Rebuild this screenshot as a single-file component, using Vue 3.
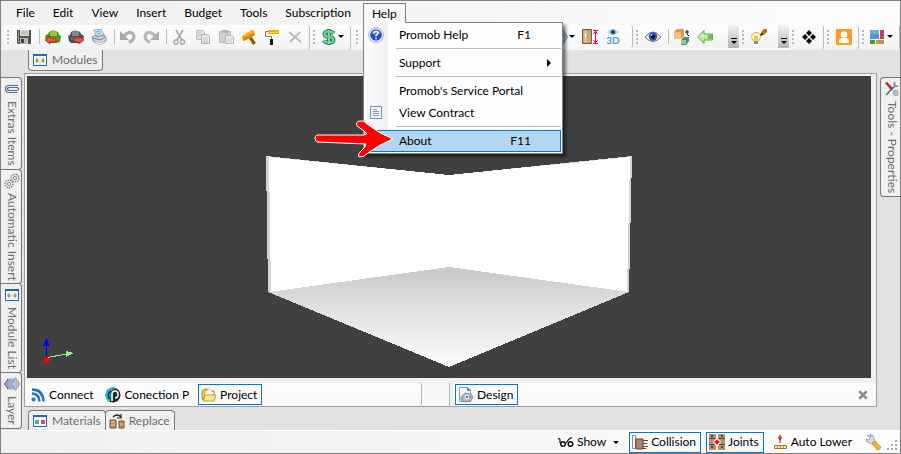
<script setup>
import { ref } from 'vue';

const menus = ['File', 'Edit', 'View', 'Insert', 'Budget', 'Tools', 'Subscription'];

const helpItems = ref([
  { label: 'Promob Help', keys: 'F1', icon: 'help' },
  { divider: true },
  { label: 'Support', submenu: true },
  { divider: true },
  { label: "Promob's Service Portal" },
  { label: 'View Contract', icon: 'contract' },
  { divider: true },
  { label: 'About', keys: 'F11', active: true },
]);

const strips = [
  { tools: ['save', '|', 'sofa-in', 'sofa-out', 'printer', '|', 'undo', 'redo', '|', 'cut', 'copy', 'paste', 'hammer', 'roller', 'remove'] },
  { tools: ['dollar+'] },
  { tools: ['layers+', 'measure', 'view3d'], kind: 'views' },
  { tools: ['eye', '|', 'boxes', 'back'], kind: 'wide', overflow: true },
  { tools: ['bulb'], overflow: true },
  { tools: ['diamonds'] },
  { tools: ['user'] },
  { tools: ['blocks+'] },
];

const leftTabs = [
  { label: 'Extras Items', icon: 'clip' },
  { label: 'Automatic Insert', icon: 'gears' },
  { label: 'Module List', icon: 'modules' },
  { label: 'Layer', icon: 'layers' },
];

const iconOf = (tool) => tool.replace('+', '');
const hasArrow = (tool) => tool.endsWith('+');
</script>

<template>
  <div class="window">
    <svg class="sprite" aria-hidden="true">
      <defs>
        <linearGradient id="floor" x1="0" y1="0" x2="0" y2="1">
          <stop offset="0" stop-color="#c8c8c8" />
          <stop offset="0.4" stop-color="#e0e0e0" />
          <stop offset="1" stop-color="#fbfbfb" />
        </linearGradient>
      </defs>
      <symbol id="save" viewBox="0 0 16 16">
        <path d="M1 1h14v14H2l-1-1z" fill="#55554f" />
        <path d="M4 1h9v6H4z" fill="#d9ddc9" />
        <path d="M5 3h7M5 5h7" stroke="#a9ad9b" />
        <path d="M4 9h8v6H4z" fill="#b9b9b2" />
        <path d="M5 10h3v4H5z" fill="#3d3d3a" />
        <path d="M2 2h1v12H2z" fill="#8b8b80" />
      </symbol>
      <symbol id="sofa-in" viewBox="0 0 16 16">
        <path d="M4 3q4-3 9 0l1 3 2 1-1 6-3 1H4L0 9l1-3 2-1z" fill="#4f8f1c" />
        <path d="M5 3q3-2 7 0v4H5z" fill="#8bcb3a" />
        <path d="M4 8h9v3H4z" fill="#69b02a" />
        <path d="M0 11l5-4v2h6v4H5v2z" fill="#e4553f" stroke="#8f2418" stroke-width=".7" />
      </symbol>
      <symbol id="sofa-out" viewBox="0 0 16 16">
        <path d="M3 3q4-3 9 0l1 2 3 2-1 5-3 2H3l-2-2-1-5 2-1z" fill="#4b4e52" />
        <path d="M4 3q3-2 7 0v4H4z" fill="#85898e" />
        <path d="M3 8h9v3H3z" fill="#676b70" />
        <path d="M16 11l-5-4v2H6v4h5v2z" fill="#e4553f" stroke="#8f2418" stroke-width=".7" />
      </symbol>
      <symbol id="printer" viewBox="0 0 16 16">
        <path d="M3 1l7-1 3 6-8 2z" fill="#cfe3fb" stroke="#7c9dca" stroke-width=".8" />
        <path d="M5 3l4-1M6 5l4-1" stroke="#6e9fdc" />
        <path d="M1 8l4-2 1 2 7-2 2 2v4l-6 3-7-3z" fill="#d4d6da" stroke="#777b82" stroke-width=".8" />
        <path d="M2 9l7 2 5-3" fill="none" stroke="#777b82" />
        <path d="M4 12l5 2 5-2-1 2-4 2-5-2z" fill="#f8f8f8" stroke="#8b8f95" stroke-width=".5" />
      </symbol>
      <symbol id="undo" viewBox="0 0 16 16">
        <path d="M4 7Q9 1 13 5q3 5-4 8.500" fill="none" stroke="#b0b0b0" stroke-width="3.200" />
        <path d="M0 2v9h9z" fill="#a9a9a9" />
      </symbol>
      <symbol id="redo" viewBox="0 0 16 16">
        <path d="M12 7Q7 1 3 5q-3 5 4 8.500" fill="none" stroke="#b8b8b8" stroke-width="3.200" />
        <path d="M16 2v9H7z" fill="#adadad" />
      </symbol>
      <symbol id="cut" viewBox="0 0 16 16">
        <path d="M4 1l6 10M11 1L5 11" stroke="#aaa" stroke-width="1.700" />
        <ellipse cx="4" cy="13" rx="2" ry="2.200" fill="none" stroke="#aaa" stroke-width="1.400" />
        <ellipse cx="10.500" cy="13" rx="2" ry="2.200" fill="none" stroke="#aaa" stroke-width="1.400" />
      </symbol>
      <symbol id="copy" viewBox="0 0 16 16">
        <path d="M1.500 1.500h6l2 2v7h-8z" fill="#e0e0e0" stroke="#bcbcbc" />
        <path d="M6.500 5.500h6l2 2v7h-8z" fill="#e6e6e6" stroke="#b1b1b1" />
        <path d="M8 9h5M8 11h5M8 13h5M3 4h3M3 6h3" stroke="#c4c4c4" />
      </symbol>
      <symbol id="paste" viewBox="0 0 16 16">
        <path d="M1.500 2.500h11v11h-11z" fill="#d0d0d0" stroke="#bbb" />
        <path d="M4 1h6v3H4z" fill="#b5b5b5" />
        <path d="M7.500 6.500h6l2 2v6h-8z" fill="#ececec" stroke="#b4b4b4" />
        <path d="M9 10h5M9 12h5" stroke="#c4c4c4" />
      </symbol>
      <symbol id="hammer" viewBox="0 0 16 16">
        <path d="M7 8l3-1 5 7-3 2z" fill="#8d5a13" />
        <path d="M1 7l10-6 2 1 1 4-9 5-3 1z" fill="#f5ac0c" />
        <path d="M2 9l11-5 1 2-9 5-3 1z" fill="#d58a06" />
      </symbol>
      <symbol id="roller" viewBox="0 0 16 16">
        <path d="M4 1h11v4H4z" fill="#f7ac08" />
        <path d="M4 3h11v1H4z" fill="#ffca3e" />
        <path d="M4 2.500H1.500v5h6V10" fill="none" stroke="#777" />
        <path d="M6 10h3v6H6z" fill="#111" />
      </symbol>
      <symbol id="remove" viewBox="0 0 16 16">
        <path d="M2 3l12 10M13 3L3 13" stroke="#bdbdbd" stroke-width="2.200" />
      </symbol>
      <symbol id="dollar" viewBox="0 0 16 16">
        <path d="M13 4.500Q11 2.500 8 2.500q-4.500 0-4.500 2.500T8 8t4.500 3-4.500 2.500-5-2M8 0v16" fill="none" stroke="#24804c" stroke-width="4" />
        <path d="M13 4.500Q11 2.500 8 2.500q-4.500 0-4.500 2.500T8 8t4.500 3-4.500 2.500-5-2M8 1v14" fill="none" stroke="#7fd6a0" stroke-width="2" />
      </symbol>
      <symbol id="help" viewBox="0 0 16 16">
        <circle cx="8" cy="8" r="7.500" fill="#e9eef6" stroke="#a0a9b8" stroke-width=".8" />
        <circle cx="8" cy="8" r="5.800" fill="#1d4ec4" />
        <path d="M3 6q5-5 10 0-5 3-10 0" fill="#5b87e0" />
        <path d="M5.800 6.300Q6 4.300 8 4.300t2.200 1.900Q10 7.200 8 8.500v1M8 10.700v1.500" fill="none" stroke="#fff" stroke-width="1.500" />
      </symbol>
      <symbol id="contract" viewBox="0 0 16 16">
        <path d="M2.500 1.500h11v12h-11z" fill="#f5f9ff" stroke="#668ec2" />
        <path d="M5 4.500h4M5 6.500h6M5 8.500h6M5 10.500h6" stroke="#8095b3" />
      </symbol>
      <symbol id="layers" viewBox="0 0 16 16">
        <path d="M4 2L0 8l4 6 4-6z" fill="#5d7590" />
        <path d="M6.500 1.500l-4.500 6.500 4.500 6.500L11 8z" fill="#7c95b0" stroke="#e5edf5" stroke-width=".6" />
        <path d="M9 1.500L4.500 8 9 14.500 13.500 8z" fill="#92abc5" stroke="#e5edf5" stroke-width=".6" />
        <path d="M11.500 1.500L7 8l4.500 6.500L16 8z" fill="#a9c0d8" stroke="#6d89a8" stroke-width=".6" />
      </symbol>
      <symbol id="measure" viewBox="0 0 16 16">
        <path d="M.5.500h9v14h-9z" fill="#c9a77b" stroke="#7b5a36" />
        <path d="M2 2h3v11H2z" fill="#dcc29b" />
        <path d="M3 5h1v3H3z" fill="#fff" />
        <path d="M11 1.500h5M11 14.500h5M13.500 2v12M11.500 5l2-3 2 3M11.500 11l2 3 2-3" fill="none" stroke="#d80d52" />
      </symbol>
      <symbol id="view3d" viewBox="0 0 16 8">
        <path d="M2 4q6-6 12 0-6 6-12 0" fill="#b8d7ea" />
        <circle cx="8" cy="4" r="2.600" fill="#3f7fae" />
        <circle cx="8" cy="4" r="1.200" fill="#0d2538" />
      </symbol>
      <symbol id="eye" viewBox="0 0 16 16">
        <path d="M0 8q8-10 16 0-8 9-16 0" fill="#efefed" stroke="#77716c" />
        <circle cx="8" cy="7.500" r="4.200" fill="#2351ae" />
        <circle cx="8" cy="7.500" r="1.900" fill="#07102c" />
        <circle cx="6.500" cy="6" r="1" fill="#9fc0f5" />
      </symbol>
      <symbol id="boxes" viewBox="0 0 16 16">
        <path d="M0 3l3-3h7v7l-3 3H0z" fill="#d49c50" />
        <path d="M0 3h7v7H0z" fill="#edbf80" />
        <path d="M7 11l3-3h5v4l-3 4H7z" fill="#4f8a68" />
        <path d="M7 11h5v4H7z" fill="#92c9a5" />
        <path d="M11 3h4M13 1v4l2 2" fill="none" stroke="#111" />
      </symbol>
      <symbol id="back" viewBox="0 0 16 16">
        <path d="M.700 8L7 1.500V5h8.500v6H7v3.500z" fill="#b7e79a" stroke="#61a94c" />
        <path d="M11 6h4v4h-4z" fill="#6fbd52" />
        <path d="M3 8l3-3v2h4" fill="none" stroke="#e4f8d8" />
      </symbol>
      <symbol id="bulb" viewBox="0 0 16 16">
        <path d="M5 3.500q5 0 4.500 4Q9 10 7.500 12h-5Q.500 10 .500 7.500.500 4 5 3.500z" fill="#fbf2b2" stroke="#cdb865" />
        <path d="M4 11V7l1 1 1-1v4" fill="none" stroke="#dba400" />
        <path d="M3 12h4v3H3z" fill="#8d9198" />
        <path d="M9 6l2-3 2 2-3 2z" fill="#222" />
        <path d="M10 3l3-3h3v3l-3 3z" fill="#cf6c17" />
      </symbol>
      <symbol id="diamonds" viewBox="0 0 16 16">
        <path d="M8 1l3 3-3 3-3-3zM8 9l3 3-3 3-3-3zM4 5l3 3-3 3-3-3zM12 5l3 3-3 3-3-3z" fill="#0d0d0d" />
      </symbol>
      <symbol id="user" viewBox="0 0 16 16">
        <path d="M0 0h16v16H0z" fill="#ff9b1a" />
        <circle cx="8" cy="5.500" r="3.300" fill="#fff" />
        <path d="M3 14v-2q0-3 3-3h4q3 0 3 3v2z" fill="#fff" />
      </symbol>
      <symbol id="blocks" viewBox="0 0 16 16">
        <path d="M0 1h9v9H0z" fill="#4d93d6" />
        <path d="M0 1h9v4H0z" fill="#6fabe3" />
        <path d="M10 1h4v9h-4z" fill="#b64753" />
        <path d="M0 11h5v4H0z" fill="#43a02e" />
        <path d="M6 11h8v4H6z" fill="#c2924a" />
      </symbol>
      <symbol id="modules" viewBox="0 0 16 16">
        <path d="M1.500 2.500h13v11h-13z" fill="#f4f8fb" stroke="#1d67be" />
        <path d="M1 2h14v2H1z" fill="#1d67be" />
        <path d="M8 5v8" stroke="#cadbe9" />
        <ellipse cx="5" cy="8.500" rx="1.500" ry="2.300" fill="#b59566" />
        <ellipse cx="11" cy="8.500" rx="1.500" ry="2.300" fill="#b59566" />
      </symbol>
      <symbol id="materials" viewBox="0 0 16 16">
        <path d="M1.500 2.500h13v11h-13z" fill="#f4f8fb" stroke="#1d67be" />
        <path d="M1 2h14v2H1z" fill="#1d67be" />
        <path d="M3 7h4v4H3z" fill="#68a183" />
        <path d="M9 7h4v4H9z" fill="#d4525b" />
      </symbol>
      <symbol id="replace" viewBox="0 0 16 16">
        <path d="M1 7h6v8H1zM10 8h5v7h-5z" fill="#bd9166" stroke="#755334" />
        <path d="M2 9h4M2 12h4M11 11h3" stroke="#e8caa2" />
        <path d="M4 4q4-4 8 0M12 1v4H8" fill="none" stroke="#222" stroke-width="1.200" />
      </symbol>
      <symbol id="clip" viewBox="0 0 16 16">
        <path d="M14 4.500H5Q1.500 4.500 1.500 8T5 11.500h8.500M14 6.500H6Q3.500 6.500 3.500 8T6 9.500h6.500q2 0 2-1.500t-2-1.500" fill="none" stroke="#4a6994" stroke-width="1.200" />
      </symbol>
      <symbol id="gears" viewBox="0 0 16 16">
        <g fill="none" stroke="#8c8c96">
          <circle cx="11" cy="5" r="3.800" stroke-dasharray="1.500 .800" stroke-width="1.600" />
          <circle cx="11" cy="5" r="1.600" />
          <circle cx="5" cy="11" r="3.800" stroke-dasharray="1.500 .800" stroke-width="1.600" />
          <circle cx="5" cy="11" r="1.600" />
        </g>
      </symbol>
      <symbol id="tools" viewBox="0 0 16 16">
        <path d="M2 14L12 4" stroke="#54647c" stroke-width="1.500" />
        <path d="M10 1q-2 3 1 5 3 1 4-2l-2 1-2-2 1-2z" fill="#8296b2" />
        <path d="M1 2l2-1 6 6-2 2z" fill="#c8202b" />
        <path d="M8 8l3 4M11 9l3 1v4l-3 1-2-3z" stroke="#9aa9bf" fill="#b7c3d4" />
      </symbol>
      <symbol id="feed" viewBox="0 0 16 16">
        <circle cx="3.500" cy="12.500" r="2" fill="#1d74c9" />
        <path d="M2 6.500q7 0 7.500 8M2 2.500q11 0 11.500 12" fill="none" stroke="#1d74c9" stroke-width="2.500" />
      </symbol>
      <symbol id="brand-p" viewBox="0 0 16 16">
        <circle cx="8" cy="8" r="7.500" fill="#1c2c33" />
        <path d="M8 .500Q0 1 .500 8.500 1 14 5 15L5.500 8Q5 3 11 1z" fill="#23bcd0" />
        <path d="M7 14V7.500Q7 4 10 4t3 3.500-3 3.500" fill="none" stroke="#fff" stroke-width="1.600" />
        <path d="M4 12q-2-6 2-8" fill="none" stroke="#1c2c33" stroke-width="1.500" />
      </symbol>
      <symbol id="folder" viewBox="0 0 16 16">
        <path d="M1 4l2-2h3l1 2h6v9H2L1 12z" fill="#e9c24c" stroke="#a67c18" stroke-width=".8" />
        <path d="M4 5l4-3 5 4-2 3H4z" fill="#fffbe8" stroke="#b7a36b" stroke-width=".6" />
        <path d="M4 8h11l-2 6H2z" fill="#ffe784" stroke="#b58c1f" stroke-width=".8" />
      </symbol>
      <symbol id="design" viewBox="0 0 16 16">
        <path d="M1.500.500h8l3 3v11h-11z" fill="#edf5ff" stroke="#77a0d3" />
        <path d="M9 0l4 4H9z" fill="#4f85c6" />
        <path d="M3 10l4-4 6 1 2 3-2 4-6 1-4-2z" fill="#aeb4bc" stroke="#747b86" stroke-width=".7" />
        <circle cx="9" cy="10" r="2.500" fill="#e9edf2" />
        <path d="M8 9h2v2H8z" fill="#436c9e" />
        <path d="M11 9h2v2h-2z" fill="#d18d3c" />
      </symbol>
      <symbol id="glasses" viewBox="0 0 16 16">
        <path d="M0 5q2-1 2 1v3M8 9q4-6 6-5" fill="none" stroke="#111" stroke-width="1.200" />
        <circle cx="5" cy="10" r="2.300" fill="none" stroke="#111" stroke-width="1.500" />
        <circle cx="12.500" cy="10" r="2.300" fill="none" stroke="#111" stroke-width="1.500" />
      </symbol>
      <symbol id="collision" viewBox="0 0 16 16">
        <path d="M.500 1.500h3v13h-3z" fill="#f2f2f2" stroke="#8c8c8c" />
        <path d="M4 5h7v10H4z" fill="#b08565" stroke="#5e4330" />
        <path d="M11 6.500h5M11 9.500h4M11 12.500h5M11 14.500h3" stroke="#5e4330" />
      </symbol>
      <symbol id="joints" viewBox="0 0 16 16">
        <path d="M0 0h7v16H0zM9 0h7v16H9z" fill="#b3906f" />
        <path d="M0 4.500h7M0 10.500h7M9 4.500h7M9 10.500h7" stroke="#5c4330" />
        <path d="M2 2h2M12 2h2M2 13h2M12 13h2" stroke="#3f2c1e" stroke-width="1.500" />
        <path d="M6.500 5h3v1.500H11v3H9.500V11h-3V9.500H5v-3h1.500z" fill="#f11" stroke="#fff" />
      </symbol>
      <symbol id="lower" viewBox="0 0 16 16">
        <path d="M8 0l2 4-2 3-2-3z" fill="#e04a4a" />
        <path d="M8 3v6" stroke="#8f2222" />
        <path d="M2.500 11.500h12v3h-12z" fill="#ffe7b0" stroke="#b16f19" />
        <path d="M5.500 12v2M8.500 12v2M11.500 12v2" stroke="#c68a3a" />
      </symbol>
      <symbol id="wrench" viewBox="0 0 16 16">
        <path d="M2 1l3 3-1 2-3-1q0 4 4 4l3 2 3-3-2-3q0-4-4-5l1 3z" fill="#d5dadf" stroke="#868e98" stroke-width=".7" />
        <path d="M7 9l3-2 6 6-2 3h-2z" fill="#f4b52a" stroke="#c7820f" stroke-width=".7" />
      </symbol>
    </svg>

    <nav class="menubar">
      <button v-for="menu in menus" :key="menu" class="menu-button">{{ menu }}</button>
      <div class="menu-open">
        <button class="menu-button open" aria-expanded="true">Help</button>
        <div class="dropdown" role="menu">
          <template v-for="(item, i) in helpItems" :key="i">
            <div v-if="item.divider" class="divider" role="separator" />
            <button v-else class="menu-item" :class="{ active: item.active }" role="menuitem">
              <span class="item-icon">
                <svg v-if="item.icon" class="icon"><use :href="'#' + item.icon" /></svg>
              </span>
              <span class="item-label">{{ item.label }}</span>
              <span v-if="item.keys" class="item-keys">{{ item.keys }}</span>
              <span v-if="item.submenu" class="submenu-arrow" />
            </button>
          </template>
          <svg class="pointer" viewBox="0 0 84 40">
            <path d="M5 15L50 15Q58 15 52 11L45 6Q43 2 48 1Q52 0 55 4Q68 14 81 19Q68 24 56 33Q51 38 47 37Q45 34 49 31Q54 27 54 24L5 22Q1 18 5 15z" fill="#f00" stroke="#fff" stroke-width="1" />
          </svg>
        </div>
      </div>
    </nav>

    <div class="toolbar">
      <div v-for="(strip, s) in strips" :key="s" class="strip" :class="[strip.kind, { overflowing: strip.overflow }]">
        <span class="grip" />
        <template v-for="(tool, t) in strip.tools" :key="t">
          <span v-if="tool === '|'" class="separator" />
          <button v-else-if="tool === 'view3d'" class="tool stacked">
            <svg class="icon"><use href="#view3d" /></svg>
            <span>3D</span>
          </button>
          <button v-else class="tool" :class="{ split: hasArrow(tool) }" :aria-label="iconOf(tool)">
            <svg class="icon"><use :href="'#' + iconOf(tool)" /></svg>
            <span v-if="hasArrow(tool)" class="caret" />
          </button>
        </template>
        <button v-if="strip.overflow" class="overflow" aria-label="More tools"><span class="caret" /></button>
      </div>
    </div>

    <main class="workspace">
      <aside class="side left">
        <button v-for="tab in leftTabs" :key="tab.label" class="side-tab">
          <svg class="icon"><use :href="'#' + tab.icon" /></svg>
          <span>{{ tab.label }}</span>
        </button>
      </aside>

      <section class="center">
        <div class="tabs top">
          <button class="tab"><svg class="icon"><use href="#modules" /></svg>Modules</button>
        </div>
        <div class="frame">
          <div class="stage">
            <svg class="scene" viewBox="27 76 844 302" shape-rendering="crispEdges">
              <path d="M266 156L449 175L632 156L629 292L449 367L268 292z" fill="#d4d4d4" />
              <path d="M269 157L449 175L630 157L627 292L449 267L271 292z" fill="#fff" />
              <path d="M269 292L449 267L629 292L449 367z" fill="url(#floor)" />
              <path d="M46.500 358V344" stroke="#00f" />
              <path d="M43 346l3.500-8 3.500 8z" fill="#00f" />
              <path d="M47 357.500L67 354" stroke="#90ee90" />
              <path d="M66 351l8 2-8 4z" fill="#90ee90" />
              <path d="M44 359l3-2 3 3-2 3h-5z" fill="#f00" />
            </svg>
          </div>
          <div class="views-bar">
            <div class="views main">
              <button class="view-button"><svg class="icon"><use href="#feed" /></svg>Connect</button>
              <button class="view-button"><svg class="icon"><use href="#brand-p" /></svg>Conection P</button>
              <button class="view-button checked"><svg class="icon"><use href="#folder" /></svg>Project</button>
            </div>
            <span class="views-gap" />
            <div class="views">
              <button class="view-button checked"><svg class="icon"><use href="#design" /></svg>Design</button>
              <button class="close" aria-label="Close">
                <svg viewBox="0 0 8 8"><path d="M1 1l6 6M7 1L1 7" stroke="#8c8c8c" stroke-width="2" /></svg>
              </button>
            </div>
          </div>
        </div>
        <div class="tabs bottom">
          <button class="tab"><svg class="icon"><use href="#materials" /></svg>Materials</button>
          <button class="tab"><svg class="icon"><use href="#replace" /></svg>Replace</button>
        </div>
      </section>

      <aside class="side right">
        <button class="side-tab">
          <svg class="icon"><use href="#tools" /></svg>
          <span>Tools - Properties</span>
        </button>
      </aside>
    </main>

    <footer class="statusbar">
      <button class="status-button show"><svg class="icon"><use href="#glasses" /></svg>Show<span class="caret" /></button>
      <button class="status-button checked"><svg class="icon"><use href="#collision" /></svg>Collision</button>
      <button class="status-button checked"><svg class="icon"><use href="#joints" /></svg>Joints</button>
      <button class="status-button"><svg class="icon"><use href="#lower" /></svg>Auto Lower</button>
      <button class="status-button settings" aria-label="Settings"><svg class="icon"><use href="#wrench" /></svg></button>
      <svg class="size-grip" viewBox="0 0 11 11">
        <path d="M8 0h2v2H8zM4 4h2v2H4zM8 4h2v2H8zM0 8h2v2H0zM4 8h2v2H4zM8 8h2v2H8z" fill="#aaa" />
      </svg>
    </footer>
  </div>
</template>

<style>
body {
  margin: 0;
}
</style>

<style scoped>
.window {
  box-sizing: border-box;
  height: 100vh;
  display: flex;
  flex-direction: column;
  border: 1px solid #7f7f7f;
  background: #e2e2e2;
  color: #000;
  font-family: Lato, 'Open Sans', sans-serif;
  font-size: 12px;
  line-height: 16px;
  overflow: hidden;
}

.sprite {
  position: absolute;
  width: 0;
  height: 0;
}

button {
  box-sizing: border-box;
  margin: 0;
  padding: 0;
  border: 0;
  background: none;
  color: inherit;
  font: inherit;
  white-space: nowrap;
}

.icon {
  display: block;
  width: 16px;
  height: 16px;
  flex: none;
}

.caret {
  flex: none;
  border: 3px solid transparent;
  border-top-color: #000;
  border-bottom: 0;
}

.menubar {
  display: flex;
  flex: none;
  height: 24px;
  padding: 2px 0 0 6px;
  box-sizing: border-box;
  background: linear-gradient(90deg, #f0f0f0, #fcfcfc);
}

.menu-button {
  height: 20px;
  padding: 0 9px;
}

.menu-open {
  position: relative;
  margin-left: 3px;

  & .open {
    position: relative;
    z-index: 3;
    border: 1px solid #808080;
    border-bottom: 0;
    background: #f8f8f8;
    padding: 0 8px;
  }
}

.dropdown {
  position: absolute;
  z-index: 2;
  top: 19px;
  left: 0;
  box-sizing: border-box;
  width: 200px;
  padding: 1px;
  border: 1px solid #808080;
  background: linear-gradient(90deg, #fbfbfb, #f0f0f0 24px, #fdfdfd 24px);
  box-shadow: 3px 3px 3px rgba(0, 0, 0, 0.5);
}

.menu-item {
  display: flex;
  align-items: center;
  width: 100%;
  height: 22px;
  padding-right: 30px;
  position: relative;

  &.active {
    background: #b3d7f3;
    box-shadow: inset 0 0 0 1px #0078d7;
  }
}

.item-icon {
  width: 31px;
  padding-left: 3px;
}

.item-label {
  flex: 1;
  text-align: left;
}

.submenu-arrow {
  position: absolute;
  right: 10px;
  border: 4px solid transparent;
  border-left-color: #000;
  border-right: 0;
}

.divider {
  height: 1px;
  margin: 2px 0 3px 31px;
  background: #bdbdbd;
}

.pointer {
  position: absolute;
  right: 166px;
  bottom: -7px;
  width: 84px;
  height: 40px;
}

.toolbar {
  display: flex;
  flex: none;
  height: 25px;
  padding-left: 3px;
  background: linear-gradient(90deg, #f0f0f0, #fcfcfc);
}

.strip {
  display: flex;
  align-items: center;
  flex: none;
  height: 23px;
  padding: 0 3px 2px 0;
  border-right: 1px solid #bbb;
  border-radius: 3px;
  background: linear-gradient(#fdfdfd, #f2f2f2);

  &.views {
    box-sizing: border-box;
    flex: 0 1 282px;
  }

  &.overflowing {
    padding: 0;
    border-right: 0;
  }
}

.views .grip {
  margin-right: auto;
}

.views .split {
  gap: 6px;
}

.grip {
  width: 2px;
  height: 14px;
  margin: 0 3px;
  background: repeating-linear-gradient(#b8b8b8 0 2px, transparent 2px 4px);
}

.tool {
  display: flex;
  align-items: center;
  padding: 0 3px 0 4px;

  &.split {
    gap: 1px;
    padding: 0 3px;
  }

  &.stacked {
    flex-direction: column;
    color: #4f94c4;
    font-size: 10px;
    font-weight: 700;
    line-height: 9px;
  }

  &.stacked .icon {
    height: 8px;
  }
}

.separator {
  width: 1px;
  height: 15px;
  margin: 0 1px 0 4px;
  background: #bdbdbd;
}

.overflow {
  display: flex;
  flex-direction: column;
  justify-content: flex-end;
  align-items: center;
  align-self: flex-start;
  gap: 2px;
  width: 11px;
  height: 23px;
  margin-left: 8px;
  padding-bottom: 4px;
  background: linear-gradient(#f3f3f3, #b4b4b4);

  &::before {
    content: '';
    width: 6px;
    height: 1px;
    background: #000;
  }
}

.wide .overflow {
  margin-left: 12px;
}

.workspace {
  display: flex;
  flex: 1;
  min-height: 0;
}

.side {
  display: flex;
  flex-direction: column;
  flex: none;
  box-sizing: border-box;
  width: 21px;
  padding-top: 27px;
  overflow: hidden;
  color: #6d6d6d;
}

.side-tab {
  display: flex;
  align-items: center;
  flex: none;
  gap: 4px;
  width: 21px;
  padding: 3px 0 3px 2px;
  border: 1px solid #777;
  border-left: 0;
  border-radius: 0 4px 4px 0;
  background: #f0f0f0;
  writing-mode: vertical-rl;
}

.left .side-tab + .side-tab {
  margin-top: -1px;
}

.right {
  width: 20px;
}

.right .side-tab {
  width: 20px;
  border: 1px solid #777;
  border-right: 0;
  border-radius: 4px 0 0 4px;
}

.center {
  display: flex;
  flex-direction: column;
  flex: 1;
  min-width: 0;
  margin: 0 3px 0 2px;
}

.tabs {
  display: flex;
  padding-left: 4px;
  color: #6d6d6d;
}

.tab {
  display: flex;
  align-items: center;
  gap: 4px;
  height: 21px;
  padding: 0 4px 0 3px;
  border: 1px solid #777;
  background: #f0f0f0;
}

.top {
  margin-bottom: 2px;

  & .tab {
    border-top: 0;
    border-radius: 0 0 4px 4px;
  }
}

.bottom {
  margin-top: 3px;

  & .tab {
    height: 20px;
    border-bottom: 0;
    border-radius: 4px 4px 0 0;
  }

  & .tab + .tab {
    margin-left: -1px;
  }
}

.frame {
  display: flex;
  flex-direction: column;
  flex: 1;
  min-height: 0;
  border: 1px solid #a0a0a0;
  background: #f0f0f0;
}

.stage {
  flex: 1;
  min-height: 0;
  margin: 2px 5px 5px 2px;
  background: #404040;
}

.scene {
  display: block;
  width: 100%;
  height: 100%;
}

.views-bar {
  display: flex;
  flex: none;
  height: 23px;
}

.views {
  display: flex;
  align-items: center;
  flex: 1;
  padding: 0 8px 0 2px;
  border-radius: 3px;
  background: linear-gradient(#fefefe, #f6f6f6);
}

.views.main {
  flex: 0 1 397px;
  box-sizing: border-box;
  gap: 4px;
  border-right: 1px solid #b5b5b5;
}

.views-gap {
  width: 28px;
  box-sizing: border-box;
  margin-right: 3px;
  border-right: 1px solid #b5b5b5;
  background: #f8f8f8;
}

.view-button,
.status-button {
  display: flex;
  align-items: center;
  gap: 3px;
  height: 21px;
  padding: 0 4px 0 2px;
  border: 1px solid transparent;
}

.checked {
  border-color: #0078d7;
  background: #fbfbfb;
}

.close {
  width: 10px;
  height: 10px;
  margin-left: auto;
}

.close svg {
  display: block;
  width: 10px;
  height: 10px;
}

.statusbar {
  display: flex;
  align-items: center;
  justify-content: flex-end;
  flex: none;
  gap: 5px;
  box-sizing: border-box;
  height: 23px;
  padding-right: 2px;
  border-top: 1px solid #fff;
  background: linear-gradient(90deg, #f0f0f0, #fcfcfc);
}

.settings {
  padding-right: 0;
}

.show .caret {
  margin-left: 4px;
}

.size-grip {
  width: 11px;
  height: 11px;
  align-self: flex-end;
  margin-bottom: 2px;
}
</style>
